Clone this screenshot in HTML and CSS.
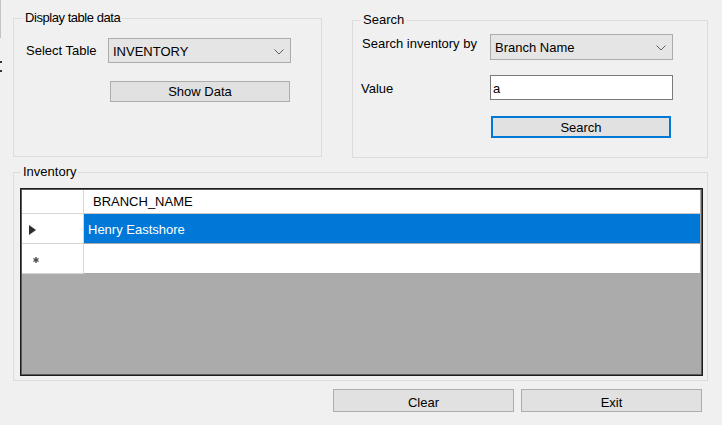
FILE: index.html
```html
<!DOCTYPE html>
<html>
<head>
<meta charset="utf-8">
<title>Inventory</title>
<link rel="stylesheet" href="styles.css">
</head>
<body>
<div class="edge"><span class="edge-line"></span><span class="edge-dot dot-a"></span><span class="edge-dot dot-b"></span></div>
<div class="form">
  <div class="top">
    <fieldset class="group g-display">
      <legend class="tight">Display table data</legend>
      <div class="fields f-display">
        <label class="lbl">Select Table</label>
        <div class="combo"><span>INVENTORY</span><svg class="chev" width="10" height="6" viewBox="0 0 10 6"><polyline points="0.5,0.5 5,5 9.5,0.5" fill="none" stroke="#5f5f5f" stroke-width="1"/></svg></div>
        <button class="btn btn-show">Show Data</button>
      </div>
    </fieldset>
    <fieldset class="group g-search">
      <legend>Search</legend>
      <div class="fields f-search">
        <label class="lbl lbl-top">Search inventory by</label>
        <div class="combo combo-tall"><span>Branch Name</span><svg class="chev" width="10" height="6" viewBox="0 0 10 6"><polyline points="0.5,0.5 5,5 9.5,0.5" fill="none" stroke="#5f5f5f" stroke-width="1"/></svg></div>
        <label class="lbl lbl-value">Value</label>
        <div class="textbox">a</div>
        <button class="btn btn-search">Search</button>
      </div>
    </fieldset>
  </div>
  <fieldset class="group g-inv">
    <legend class="leg-inv">Inventory</legend>
    <div class="dgv">
      <div class="dgv-row dgv-head"><div class="rh"></div><div class="cell head-cell">BRANCH_NAME</div></div>
      <div class="dgv-row dgv-sel"><div class="rh"><svg class="tri" width="7" height="10" viewBox="0 0 7 10"><polygon points="0,0 7,5 0,10" fill="#2e2e2e"/></svg></div><div class="cell sel-cell">Henry Eastshore</div></div>
      <div class="dgv-row dgv-new"><div class="rh"><svg class="star" width="6" height="6" viewBox="0 0 6 6"><g stroke="#4a4a4a" stroke-width="1.4"><line x1="3" y1="0" x2="3" y2="6"/><line x1="0.4" y1="1.5" x2="5.6" y2="4.5"/><line x1="0.4" y1="4.5" x2="5.6" y2="1.5"/></g></svg></div><div class="cell"></div></div>
    </div>
  </fieldset>
  <div class="actions">
    <button class="btn btn-bottom">Clear</button>
    <button class="btn btn-bottom">Exit</button>
  </div>
</div>
</body>
</html>
```
FILE: styles.css
```css
* { box-sizing: border-box; }
html, body { margin: 0; padding: 0; }
body {
  position: relative;
  width: 722px;
  height: 425px;
  overflow: hidden;
  background: #f0f0f0;
  font-family: "Liberation Sans", Arial, sans-serif;
  font-size: 13px;
  color: #000;
}

.edge-line { position: absolute; left: 0; top: 0; width: 1px; height: 38px; background: #c4c4c4; }
.edge-dot { position: absolute; left: 0; width: 2px; height: 2px; background: #333; }
.dot-a { top: 61px; }
.dot-b { top: 70px; }

.form { padding-top: 11px; }
.top { display: flex; align-items: flex-start; padding-left: 13px; }

.group {
  margin: 0;
  border: 1px solid #dcdcdc;
  min-width: 0;
}
legend {
  line-height: 14px;
  padding: 0 2px;
  font-size: 13px;
}
.tight { letter-spacing: -0.45px; }

.g-display { width: 309px; height: 146px; padding: 0 0 0 12px; }
.g-display legend { margin-left: -3px; }
.f-display {
  display: grid;
  grid-template-columns: 82px 183px;
  padding-top: 13px;
}
.f-display .lbl { align-self: center; }

.g-search { width: 356px; height: 145px; margin-top: 2px; margin-left: 30px; padding: 0 0 0 9px; }
.g-search legend { margin-left: -1px; }
.f-search {
  display: grid;
  grid-template-columns: 128px 183px;
  padding-top: 7px;
}
.lbl-top { align-self: start; padding-top: 2px; }
.lbl-value { align-self: center; padding-top: 2px; margin-top: 15px; margin-left: -1px; }

.lbl { line-height: 16px; }

.combo {
  height: 25px;
  display: flex;
  align-items: center;
  justify-content: space-between;
  padding: 1px 6px 0 4px;
  background: #e5e5e5;
  border: 1px solid #acacac;
}
.combo-tall { height: 26px; }
.chev { display: block; margin-top: 1px; }

.textbox {
  height: 25px;
  margin-top: 15px;
  display: flex;
  align-items: center;
  padding: 1px 0 0 2px;
  background: #fff;
  border: 1px solid #7a7a7a;
}

.btn {
  margin: 0;
  padding: 0;
  font-family: inherit;
  font-size: 13px;
  color: #000;
  background: #e1e1e1;
  border: 1px solid #adadad;
  line-height: 16px;
}
.btn-show { grid-column: 2; width: 180px; height: 21px; margin-top: 18px; margin-left: 2px; padding-top: 1px; }
.btn-search {
  grid-column: 2;
  width: 180px;
  height: 22px;
  margin-top: 16px;
  margin-left: 1px;
  padding-top: 1px;
  border: 2px solid #0078d7;
}

.g-inv {
  width: 695px;
  height: 216px;
  margin: 7px 0 0 13px;
  padding: 9px 4px 4px 6px;
}
.leg-inv { margin-left: 1px; }

.dgv {
  width: 683px;
  height: 188px;
  border: 1px solid #1c1c1c;
  box-shadow: inset 0 0 0 1px #5a5a5a;
  padding: 1px;
  background: #ababab;
  background-clip: content-box;
}
.dgv-row {
  display: grid;
  grid-template-columns: 62px 1fr;
  height: 30px;
}
.dgv-head { height: 24px; }
.rh {
  display: flex;
  align-items: center;
  background: #fff;
  border-right: 1px solid #d6d6d6;
  border-bottom: 1px solid #d6d6d6;
}
.cell {
  display: flex;
  align-items: center;
  padding: 2px 0 0 4px;
  background: #fff;
  border-right: 1px solid #a9a9a9;
  border-bottom: 1px solid #a9a9a9;
}
.head-cell { padding-left: 9px; padding-top: 0; border-bottom-color: #c8c8c8; }
.sel-cell { background: #0078d7; color: #fff; }
.tri { display: block; margin: 2px 0 0 7px; }
.star { display: block; margin: 2px 0 0 11px; }

.actions {
  display: flex;
  justify-content: flex-end;
  gap: 7px;
  margin-top: 8px;
  padding-right: 20px;
}
.btn-bottom { width: 181px; height: 23px; padding-top: 4px; }
```
